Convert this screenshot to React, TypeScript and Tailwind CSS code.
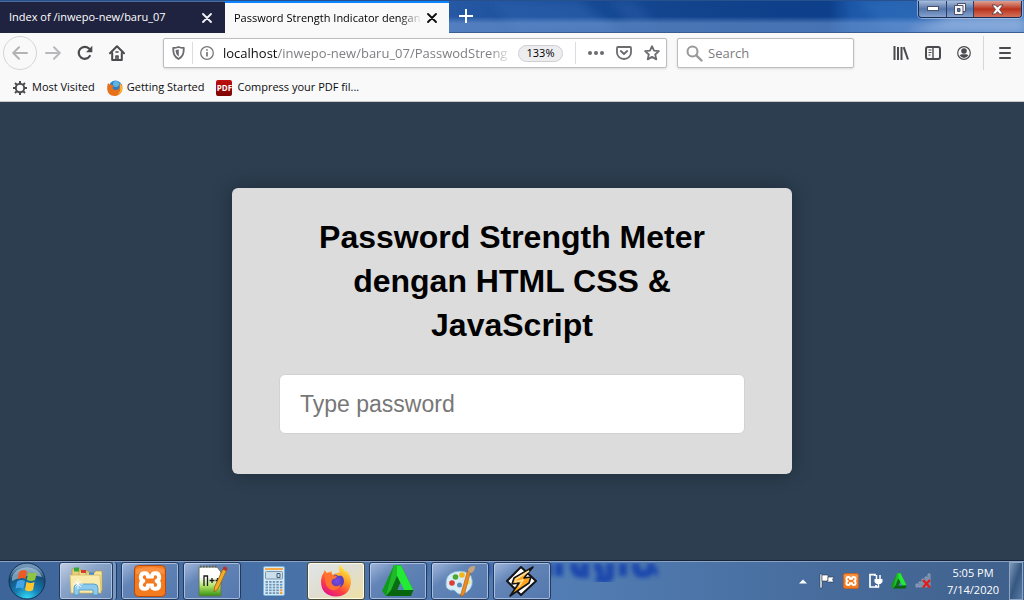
import React from "react";

const ui = "font-['Open_Sans','Noto_Sans',sans-serif]";

function CloseX({ color }: { color: string }) {
  return (
    <svg width="10" height="10" viewBox="0 0 10 10" stroke={color} strokeWidth="1.8" strokeLinecap="round">
      <path d="M1 1l8 8M9 1l-8 8" />
    </svg>
  );
}

function WallpaperGlow() {
  return (
    <svg className="absolute inset-0 size-full" viewBox="0 0 575 33" preserveAspectRatio="none" aria-hidden="true">
      <defs>
        <linearGradient id="glassTop" x1="0" x2="1" y1="0" y2="0">
          <stop offset="0" stopColor="#2658a4" />
          <stop offset="0.25" stopColor="#164993" />
          <stop offset="0.5" stopColor="#10418b" />
          <stop offset="0.66" stopColor="#0d3f8a" />
          <stop offset="0.7" stopColor="#1c57a8" />
          <stop offset="0.82" stopColor="#2c66b2" />
          <stop offset="1" stopColor="#4a7dbd" />
        </linearGradient>
        <linearGradient id="glassLow" x1="0" x2="0" y1="0" y2="1">
          <stop offset="0.5" stopColor="#7fa5dc" stopOpacity="0" />
          <stop offset="0.72" stopColor="#7fa5dc" stopOpacity="0.5" />
          <stop offset="1" stopColor="#7fa5dc" stopOpacity="0.5" />
        </linearGradient>
        <filter id="soft"><feGaussianBlur stdDeviation="5" /></filter>
      </defs>
      <rect width="575" height="33" fill="url(#glassTop)" />
      <g filter="url(#soft)">
        <path d="M40 0h90l40 33H70z" fill="#2a5ea9" opacity=".7" />
        <path d="M160 0h25l20 22h-25z" fill="#2f62ac" opacity=".4" />
        <path d="M410 0h40l40 33h-50z" fill="#2b68b8" opacity=".7" />
        <path d="M460 33l40-15h75v15z" fill="#a6bfe4" opacity=".8" />
      </g>
      <rect width="575" height="33" fill="url(#glassLow)" />
    </svg>
  );
}

function TitleBar() {
  return (
    <header className="relative flex h-[33px] items-start border-t border-[#27508c] bg-[#1d4f99]">
      <div className="absolute inset-y-0 right-0 left-[449px] border-b border-[#3b5d92]">
        <WallpaperGlow />
      </div>
      <div className="relative flex h-8 w-[225px] items-center border-t border-[#4a6a9a] bg-[#20233f] pr-[13px] pl-[9px] text-white">
        <span className="flex-1 whitespace-nowrap text-[11px]">Index of /inwepo-new/baru_07</span>
        <button aria-label="Close tab"><CloseX color="#f4f4f6" /></button>
      </div>
      <div className="relative flex h-8 w-[224px] items-center border-t-2 border-[#0a84ff] bg-[#f9f9fa] pr-3 pl-[9px] text-black">
        <span className="w-[188px] whitespace-nowrap text-[11px] [mask-image:linear-gradient(to_right,black_88%,transparent)]">
          Password Strength Indicator dengan
        </span>
        <button aria-label="Close tab" className="ml-auto"><CloseX color="#0c0c0d" /></button>
      </div>
      <button aria-label="New tab" className="relative ml-[10px] pt-2">
        <svg width="14" height="14" viewBox="0 0 14 14" stroke="#fff" strokeWidth="2"><path d="M7 0v14M0 7h14" /></svg>
      </button>
      <div className="relative mr-[2px] ml-auto flex h-[17px] overflow-hidden rounded-b-[4px] border border-t-0 border-[#1b2c52] shadow-[0_0_0_1px_rgba(190,210,240,0.6)]">
        <button aria-label="Minimize" className="flex w-7 items-center justify-center border-r border-[#2b3f69] bg-linear-to-b from-[#a9bcd9] via-[#5676ab] via-50% to-[#86a3cf]">
          <svg width="12" height="6" viewBox="0 0 12 6"><rect x=".5" y=".5" width="11" height="4" fill="#fff" stroke="#4a5068" /></svg>
        </button>
        <button aria-label="Restore" className="flex w-[27px] items-center justify-center border-r border-[#2b3f69] bg-linear-to-b from-[#a9bcd9] via-[#5676ab] via-50% to-[#86a3cf]">
          <svg width="12" height="12" viewBox="0 0 12 12" fill="#f5f5f5" stroke="#4a5068">
            <path d="M3.500.5h8v8h-8z" /><path d="M.5 2.500h8.500v9H.5z" /><path d="M3.500 5.500h2.500v3H3.500z" fill="#5676ab" />
          </svg>
        </button>
        <button aria-label="Close" className="flex w-[47px] items-center justify-center bg-linear-to-b from-[#dda093] via-[#b92f19] via-50% to-[#d3705a]">
          <svg width="13" height="11" viewBox="0 0 13 11">
            <path d="M1 1h3.500l2 2.200L8.500 1H12L8.500 5.500 12 10H8.500l-2-2.300L4.500 10H1l3.500-4.500z" fill="#fff" stroke="#5a3a44" strokeWidth=".9" />
          </svg>
        </button>
      </div>
    </header>
  );
}

function NavBar() {
  return (
    <nav className="flex h-10 items-center bg-[#f9f9fa] pr-3 pl-[3px] text-[#4a4a4f]">
      <button aria-label="Back" className="flex size-[34px] items-center justify-center rounded-full border border-[#d5d5d8]">
        <svg width="16" height="14" viewBox="0 0 16 14" fill="none" stroke="#b3b3b6" strokeWidth="2" strokeLinecap="round" strokeLinejoin="round"><path d="M15 7H1.500M7 1.200L1.200 7 7 12.800" /></svg>
      </button>
      <button aria-label="Forward" className="ml-2">
        <svg width="16" height="14" viewBox="0 0 16 14" fill="none" stroke="#b9b9bc" strokeWidth="2" strokeLinecap="round" strokeLinejoin="round"><path d="M1 7h13.500M9 1.200L14.800 7 9 12.800" /></svg>
      </button>
      <button aria-label="Reload" className="ml-4">
        <svg width="16" height="16" viewBox="0 0 16 16" fill="none" stroke="currentColor" strokeWidth="2.200" strokeLinecap="round"><path d="M12.800 11A6 6 0 1 1 12 3.600" /><path d="M15.300.8v6.400H9z" fill="currentColor" stroke="none" /></svg>
      </button>
      <button aria-label="Home" className="ml-4">
        <svg width="16" height="16" viewBox="0 0 16 16" fill="none" stroke="currentColor" strokeWidth="2" strokeLinejoin="round" strokeLinecap="round"><path d="M1 8.200L8 1.200l7 7" /><path d="M3.200 8v7h9.600V8" /><path d="M7 15v-4h2v4" strokeWidth="1.600" /><path d="M7 7h2" strokeWidth="1.600" /></svg>
      </button>
      <div className="ml-[38px] flex h-[30px] w-[504px] items-center rounded-[2px] border border-[#bdbdc0] bg-white shadow-sm">
        <button aria-label="Tracking protection" className="ml-2">
          <svg width="13" height="14" viewBox="0 0 13 14"><path d="M6.500 1c2 .8 3.600 1 5.300 1 0 5.500-.8 8.600-5.300 11C2 10.600 1.200 7.500 1.200 2c1.700 0 3.300-.2 5.300-1z" fill="none" stroke="#6b6b70" strokeWidth="1.800" strokeLinejoin="round" /><path d="M6.800 3.500v7C4.200 8.700 3.700 7 3.600 4c1 0 2-.2 3.200-.5z" fill="#6b6b70" /></svg>
        </button>
        <span className="mx-[7px] h-[22px] w-px bg-[#dcdcdf]" />
        <button aria-label="Site information">
          <svg width="14" height="14" viewBox="0 0 14 14" fill="none" stroke="#77777b"><circle cx="7" cy="7" r="6.300" strokeWidth="1.300" /><path d="M7 6v4.500M7 3.300v1.500" strokeWidth="1.700" /></svg>
        </button>
        <div className="mt-[2px] ml-[9px] w-[290px] whitespace-nowrap text-[13px] text-[#808084] [mask-image:linear-gradient(to_right,black_92%,transparent)]">
          <span className="text-[#0c0c0d]">localhost</span>/inwepo-new/baru_07/PasswodStreng
        </div>
        <button className="ml-[5px] flex h-[17px] w-[45px] items-center justify-center rounded-full border border-[#cfcfd2] bg-[#ededf0] text-[11px] text-black">133%</button>
        <span className="ml-3 h-[22px] w-px bg-[#dcdcdf]" />
        <button aria-label="Page actions" className="ml-3">
          <svg width="16" height="4" viewBox="0 0 16 4" fill="#6b6b70"><circle cx="2" cy="2" r="2" /><circle cx="8" cy="2" r="2" /><circle cx="14" cy="2" r="2" /></svg>
        </button>
        <button aria-label="Save to Pocket" className="ml-3">
          <svg width="16" height="14" viewBox="0 0 16 14" fill="none" stroke="#6b6b70" strokeWidth="1.800" strokeLinecap="round" strokeLinejoin="round"><path d="M2 1h12q1 0 1 1v4.500a7 6.500 0 0 1-14 0V2q0-1 1-1z" /><path d="M4.800 5L8 8l3.200-3" /></svg>
        </button>
        <button aria-label="Bookmark" className="ml-3">
          <svg width="16" height="16" viewBox="0 0 16 16" fill="none" stroke="#6b6b70" strokeWidth="1.800" strokeLinejoin="round"><path d="M8 1.200l2 4.500 4.900.5-3.700 3.300 1.100 4.900L8 11.900l-4.300 2.500 1.100-4.900L1.100 6.200 6 5.700z" /></svg>
        </button>
      </div>
      <label className="ml-[10px] flex h-[30px] w-[177px] items-center rounded-[2px] border border-[#bdbdc0] bg-white shadow-sm">
        <svg className="ml-2 shrink-0" width="17" height="17" viewBox="0 0 17 17" fill="none" stroke="#98989b" strokeWidth="2"><circle cx="6.500" cy="6.500" r="5" /><path d="M10.300 10.300L15.500 15.500" strokeWidth="2.400" strokeLinecap="round" /></svg>
        <input aria-label="Search" placeholder="Search" className="mt-[2px] ml-[5px] w-full min-w-0 bg-transparent text-[13px] outline-none placeholder:text-[#7c7c80]" />
      </label>
      <div className="ml-auto flex items-center gap-4">
        <button aria-label="Library">
          <svg width="16" height="14" viewBox="0 0 16 14" stroke="currentColor" strokeWidth="2" fill="none"><path d="M1.500 0v14M5 1v13M8.500 1v13M10.700 1.200L15 13.500" /></svg>
        </button>
        <button aria-label="Sidebars">
          <svg width="16" height="14" viewBox="0 0 16 14" stroke="currentColor" fill="none"><rect x="1" y="1" width="14" height="12" rx="2" strokeWidth="2" /><path d="M8 1v12" strokeWidth="1.400" /><path d="M3.500 4h3M3.500 6.500h3M3.500 9h2" /></svg>
        </button>
        <button aria-label="Account">
          <svg width="14" height="14" viewBox="0 0 14 14"><circle cx="7" cy="7" r="6.300" fill="none" stroke="currentColor" strokeWidth="1.200" /><circle cx="7" cy="5" r="2.800" fill="currentColor" /><path d="M2.600 9.300q1.500-1 2.400-1h4q.9 0 2.400 1Q9.700 12 7 12T2.600 9.300z" fill="currentColor" /></svg>
        </button>
      </div>
      <span className="mr-[15px] ml-3 h-[34px] w-px bg-[#d7d7db]" />
      <button aria-label="Menu" className="mr-px">
        <svg width="12" height="12" viewBox="0 0 12 12" stroke="currentColor" strokeWidth="2" strokeLinecap="round"><path d="M1 1h10M1 6h10M1 11h10" /></svg>
      </button>
    </nav>
  );
}

function BookmarksBar() {
  return (
    <div className="flex h-7 items-center gap-3 bg-[#f9f9fa] pt-px pl-3 text-[11px] text-[#0c0c0d]">
      <a href="#" className="flex items-center gap-1">
        <svg width="16" height="16" viewBox="0 0 16 16" fill="none" stroke="#4a4a4f"><circle cx="8" cy="8" r="4.200" strokeWidth="1.900" /><path d="M8 1v2.500M8 12.500V15M1 8h2.500M12.500 8H15M3 3l1.900 1.900M11.100 11.100L13 13M13 3l-1.900 1.900M4.900 11.100L3 13" strokeWidth="2" /></svg>
        Most Visited
      </a>
      <a href="#" className="flex items-center gap-1">
        <svg width="16" height="16" viewBox="0 0 16 16"><circle cx="8.500" cy="7" r="6.500" fill="#2a7fc4" /><circle cx="9" cy="4" r="3" fill="#5fb4e6" /><path d="M1 3q1 1.500 3 1.500L7 6 5.500 7.500q.5 3 4 2.500 3.500-.5 3-5l2-1q2 4 0 8-2.500 4-7 4Q1 15.500 .2 9.500 0 6 1 3z" fill="#e8701a" /><path d="M12.500 3q2.500 2 2.800 5.500-1 5-5 6 3.500-3 3-6z" fill="#fbc12d" /></svg>
        Getting Started
      </a>
      <a href="#" className="flex items-center gap-[5px]">
        <span className="flex size-4 items-center justify-center rounded-[2px] bg-linear-to-b from-[#c01010] to-[#7c0404] text-[8px] leading-none font-bold text-white">PDF</span>
        Compress your PDF fil...
      </a>
    </div>
  );
}

function XamppIcon({ size }: { size: number }) {
  return (
    <svg width={size} height={size} viewBox="0 0 32 32">
      <rect x=".5" y=".5" width="31" height="31" rx="4" fill="#f47a20" stroke="#b4480c" />
      <path d="M2 4q14-4 28 0v5Q16 5 2 9z" fill="#fba05a" opacity=".6" />
      <g fill="none" stroke="#fff" strokeWidth="4" strokeLinejoin="round">
        <path d="M14 12.500V11q0-2.800-3.500-2.800T6.800 12q0 3.200 2.600 4-2.600.8-2.600 4 0 3.800 3.700 3.800T14 21v-1.500" />
        <path d="M18 12.500V11q0-2.800 3.500-2.800t3.700 3.800q0 3.200-2.600 4 2.600.8 2.600 4 0 3.800-3.700 3.800T18 21v-1.500" />
      </g>
      <path d="M12.500 11.500h7v2h-7zM12.500 18.500h7v2h-7z" fill="#fff" />
    </svg>
  );
}

function TriangleIcon({ size }: { size: number }) {
  return (
    <svg width={size} height={size} viewBox="0 0 32 32">
      <path d="M12 0h7L9 25l-5 6-4-5z" fill="#0f9a1c" />
      <path d="M12 0h7l12 24-9 1-7-14-5 14-6 6z" fill="#22b82c" />
      <path d="M15 1h4l12 24h-9l-7-14z" fill="#22ea35" />
      <path d="M15 11l3.500 7-3 7H9z" fill="#0a6d12" />
      <path d="M9 25h22.500L29 31H4z" fill="#07650d" />
      <path d="M18.500 17.500L22 25h-6.500z" fill="#5683b4" />
    </svg>
  );
}

const frame = "flex h-[38px] w-[58px] items-center justify-center rounded-[3px] border border-[#25395a] bg-linear-to-br from-[#a2b7dc] via-[#6284b6] via-35% to-[#5478ae] shadow-[inset_0_0_0_1px_rgba(205,220,243,0.65)]";

function StartOrb() {
  return (
    <svg width="38" height="38" viewBox="0 0 38 38">
      <defs>
        <radialGradient id="orb" cx=".5" cy="1" r=".9"><stop offset="0" stopColor="#35dff8" /><stop offset=".4" stopColor="#167fb5" /><stop offset=".8" stopColor="#154b75" /><stop offset="1" stopColor="#6f96b8" /></radialGradient>
      </defs>
      <circle cx="19" cy="19" r="18" fill="url(#orb)" stroke="#152f50" />
      <path d="M4 15a15.500 13 0 0 1 30 0q-15-4-30 4z" fill="#c6daea" opacity=".55" />
      <path d="M11 10q4-3.500 8-.8L17.500 17q-4-2.300-8 .6z" fill="#ee5a24" />
      <path d="M20.500 10q4 2.500 8.500.2L27 18q-4 2.300-8.200-.2z" fill="#8ec63f" />
      <path d="M9 19.500q4-2.700 8-.5l-1.800 8q-4-2.300-7.700 0z" fill="#43a5e8" />
      <path d="M18.500 19.800q4 2.500 8 .2L25 28q-4 2.500-8 0z" fill="#fdc52e" />
    </svg>
  );
}

function ExplorerIcon() {
  return (
    <svg width="34" height="30" viewBox="0 0 34 30">
      <path d="M3 3h8l2 2h3v18H3z" fill="#e9cf7a" stroke="#b8983e" strokeWidth=".7" /><path d="M5 1.500h5v4H5z" fill="#2faa3a" />
      <path d="M10 5h9l2 2h4v17H10z" fill="#f1dc8e" stroke="#b8983e" strokeWidth=".7" /><path d="M12 4h5v3h-5z" fill="#d23f2c" />
      <path d="M17 7h8l2-2h6v20H17z" fill="#f6e59c" stroke="#b8983e" strokeWidth=".7" /><path d="M20 6.500h5v2.500h-5z" fill="#3c8de0" />
      <path d="M1 9h30l1 18H2z" fill="#f8ebad" stroke="#d3b65c" strokeWidth=".7" />
      <path d="M5 29v-7q0-4 4-4h16q4 0 4 4v7h-5v-5H10v5z" fill="#8ccbee" stroke="#4d91bd" strokeWidth=".8" />
      <path d="M9 13v10M4 18h10M6 15l6 6M12 15l-6 6" stroke="#fff" strokeWidth=".9" />
    </svg>
  );
}

function NotepadIcon() {
  return (
    <svg width="32" height="32" viewBox="0 0 32 32">
      <defs><linearGradient id="npp" x1="0" x2="0" y1="0" y2="1"><stop offset=".35" stopColor="#fff" /><stop offset=".65" stopColor="#b4e36b" /><stop offset="1" stopColor="#32920e" /></linearGradient></defs>
      <path d="M3 2h18l4 5v24H3z" fill="url(#npp)" stroke="#65705f" /><path d="M4 1.500h18" stroke="#5c5c5c" strokeWidth="2" strokeDasharray="1.500 1.500" />
      <path d="M8 21v-10h3.500v10M13.500 15.500h5M16 13v5M19.500 15.500h4M21.500 13v5" fill="none" stroke="#1c1c1c" strokeWidth="1.300" />
      <path d="M27 4l3.500 1.500L22 24l-4 3 .5-5z" fill="#f4ad24" stroke="#94611c" strokeWidth=".8" /><path d="M27.500 1.500q3-.5 4 2l-1 2.500L26.700 4.500z" fill="#b5332d" />
    </svg>
  );
}

function CalculatorIcon() {
  const rows = [0, 1, 2, 3, 4];
  return (
    <svg width="22" height="30" viewBox="0 0 22 30">
      <rect x=".5" y=".5" width="21" height="29" rx="1.500" fill="#d7eaf7" stroke="#7ab0d6" />
      <rect x="2" y="2" width="18" height="2" fill="#f5a94a" />
      <rect x="2.500" y="5.500" width="17" height="7.500" rx="1" fill="#c9dfee" stroke="#7d97ac" />
      <path d="M14 7.500h3v4h-3z" fill="none" stroke="#44586c" />
      {rows.map((r) => rows.map((c) => <rect key={`${r}-${c}`} x={2.5 + c * 3.6} y={15 + r * 2.8} width="2.500" height="1.800" fill={c === 4 && r > 2 ? "#f39a2a" : "#6d95b5"} />))}
    </svg>
  );
}

function FirefoxIcon() {
  return (
    <svg width="32" height="32" viewBox="0 0 32 32">
      <defs>
        <linearGradient id="fx" x1=".8" y1=".05" x2=".25" y2=".95"><stop offset="0" stopColor="#fff04a" /><stop offset=".4" stopColor="#ff9426" /><stop offset=".7" stopColor="#ff4240" /><stop offset="1" stopColor="#e31587" /></linearGradient>
        <radialGradient id="fxGlobe"><stop offset="0" stopColor="#7a4be8" /><stop offset="1" stopColor="#503cb4" /></radialGradient>
      </defs>
      <path d="M20 0q4 3 5 7l1-2q5 5 5 12-1 14-15 14.500Q1 31 1 16q0-5 3-9l.5-2L7 8l5-2q-1 3 1 4l7-3q-2-3 0-7z" fill="url(#fx)" />
      <circle cx="17" cy="16" r="7" fill="url(#fxGlobe)" />
      <path d="M5 9q5-3 8 1l4 1q-1 3-4 3-3 3 0 6 4 3 8-1-2 7-9 6-8-2-7-16z" fill="#ff7130" /><path d="M14 9q5-3 9 2-3-1-4 0z" fill="#ffb52c" />
    </svg>
  );
}

function PaintIcon() {
  return (
    <svg width="32" height="32" viewBox="0 0 32 32">
      <path d="M2 20Q1 10 10 7q11-3 17 4 4 10-4 16-6 4-10 1-2-3-4-3-3 1-5-1-2-1-2-4z" fill="#d8edf8" stroke="#7db2d3" strokeWidth=".8" />
      <circle cx="8" cy="18" r="2.800" fill="#d93e2f" /><circle cx="11.500" cy="12" r="2.800" fill="#4ba930" /><circle cx="18" cy="10" r="2.800" fill="#f2b61a" /><circle cx="15.500" cy="20" r="2.500" fill="#5f8fbe" /><circle cx="24" cy="17" r="2.600" fill="#f5df75" />
      <path d="M23.500 6l3 1-6 22q-2 3-4 2 .5-2 1-4z" fill="#ee8a20" stroke="#a55d12" strokeWidth=".6" /><path d="M24 6q0-5 7-5 0 6-4.500 7z" fill="#c7a47b" />
    </svg>
  );
}

function WinampIcon() {
  return (
    <svg width="32" height="32" viewBox="0 0 32 32" strokeLinejoin="round">
      <path d="M15 2l15 14-15 14L1 16z" fill="#fff" stroke="#141414" strokeWidth="2" />
      <path d="M27 2L8 13l-2 6 7-1-9 13 19-13 2-6-7 1z" fill="#ffa51f" stroke="#141414" strokeWidth="1.600" /><path d="M23 6L10 14l-1 3 8-2-4 7" fill="none" stroke="#ffe09a" strokeWidth="1.500" />
    </svg>
  );
}

function Taskbar() {
  return (
    <footer className="relative flex h-10 items-center overflow-hidden border-t border-[#17233a] bg-linear-to-r from-[#3e659a] via-[#527db4] via-55% to-[#3f608b] pr-px pl-2 shadow-[inset_0_1px_0_#8ba3c2]">
      <svg className="absolute top-[2px] left-[420px] h-full w-[250px]" viewBox="0 0 250 39" aria-hidden="true">
        <defs><filter id="smudge"><feGaussianBlur stdDeviation="2" /></filter></defs>
        <g filter="url(#smudge)" fill="none" stroke="#1c49ad" strokeWidth="8"><path d="M2 0v12M66 0v12M128 0v13M139 0v13M154 0q0 11 7 11h4V0M178 0q-1 9 6 9M190 0v13q-2 6-14 2M203 0v13M216 0q-1 11 6 11t9-4V0M238 9h-3" /></g>
      </svg>
      <button aria-label="Start" className="relative"><StartOrb /></button>
      <div className="relative ml-[13px] flex items-center gap-1">
        <div className="flex w-[58px]">
          <button aria-label="Windows Explorer" className="flex h-[38px] w-[54px] items-center justify-center rounded-[3px] border border-[#25395a] bg-linear-to-br from-[#c3cfe4] via-[#8aa4c8] via-40% to-[#6386b5] shadow-[inset_0_0_0_1px_rgba(205,220,243,0.65)]"><ExplorerIcon /></button>
          <span className="h-[38px] w-1 rounded-r-[3px] border-r border-[#25395a] bg-[#7896c0]" />
        </div>
        <button aria-label="XAMPP" className={frame}><XamppIcon size={32} /></button>
        <button aria-label="Notepad++" className={frame}><NotepadIcon /></button>
        <button aria-label="Calculator" className="flex h-[38px] w-[58px] items-center justify-center"><CalculatorIcon /></button>
        <button aria-label="Firefox" className="flex h-[38px] w-[58px] items-center justify-center rounded-[3px] border border-[#4a4a3a] bg-linear-to-br from-[#e2e6ea] via-[#dfddd0] via-50% to-[#f0e0a0] shadow-[inset_0_0_0_1px_#fffbe6]"><FirefoxIcon /></button>
        <button aria-label="Triangle" className={frame}><TriangleIcon size={32} /></button>
        <button aria-label="Paint" className={frame}><PaintIcon /></button>
        <button aria-label="Winamp" className={frame}><WinampIcon /></button>
      </div>
      <div className="relative ml-auto flex h-full items-center pt-px text-white">
        <button aria-label="Show hidden icons" className="mr-3"><svg width="8" height="5" viewBox="0 0 8 5"><path d="M0 4.500L4 .5l4 4z" fill="#fff" /></svg></button>
        <div className="flex items-center gap-2">
          <svg width="16" height="16" viewBox="0 0 16 16" fill="#fff" stroke="#26384f" strokeWidth=".6"><path d="M1 1h2v14H1z" /><path d="M3 2h6v6H3z" /><path d="M9 4h6l-1.500 2.500L15 9H8V8h1z" /></svg>
          <XamppIcon size={16} />
          <svg width="16" height="16" viewBox="0 0 16 16" fill="none" stroke="#fff"><path d="M8 3V1.700H3V14h6v-2" strokeWidth="1.700" /><path d="M9.500 2v4M13 2v4" strokeWidth="1.500" /><path d="M7.500 6h8v3l-2 2h-4l-2-2z" fill="#fff" stroke="none" /><path d="M11.500 10v4H9" strokeWidth="1.500" /></svg>
          <TriangleIcon size={16} />
          <svg width="16" height="16" viewBox="0 0 16 16"><path d="M1 11h2v3H1zM4 9h2v5H4zM7 6h2v8H7zM10 4h2v10h-2zM13 1h2v13h-2z" fill="#637b99" stroke="#a7b6c9" strokeWidth=".7" /><path d="M8 7l7 7.500M15 7l-7 7.500" stroke="#e21b1b" strokeWidth="2.300" /></svg>
        </div>
        <time className="ml-[15px] w-[54px] text-center text-[11px] leading-[17px] whitespace-nowrap">5:05 PM<br />7/14/2020</time>
        <button aria-label="Show desktop" className="ml-[9px] h-full w-[14px] border border-[#8ea6c3] bg-linear-to-br from-[#7f9abb] via-[#36577f] to-[#587aa6]" />
      </div>
    </footer>
  );
}

export default function App() {
  return (
    <div className={`flex min-h-screen flex-col bg-[#2c3e50] ${ui}`}>
      <TitleBar />
      <NavBar />
      <BookmarksBar />
      <main className="flex flex-1 items-center justify-center border-t border-[#c9c9cc] font-['Liberation_Sans',Arial,sans-serif]">
        <section className="w-full max-w-[560px] rounded-[6px] bg-[#dcdcdc] px-[47px] pt-[27px] pb-10 shadow-[0_0_20px_rgba(0,0,0,0.3)]">
          <h1 className="mx-auto max-w-[420px] text-center text-[32px] leading-[44px] font-bold text-black">
            Password Strength Meter dengan HTML CSS &amp; JavaScript
          </h1>
          <input
            type="password"
            aria-label="Password"
            placeholder="Type password"
            className="mt-[27px] block h-[60px] w-full rounded-[6px] border border-[#d2d2d2] bg-white px-5 text-[23px] text-black outline-none placeholder:text-[#777777]"
          />
        </section>
      </main>
      <Taskbar />
    </div>
  );
}
